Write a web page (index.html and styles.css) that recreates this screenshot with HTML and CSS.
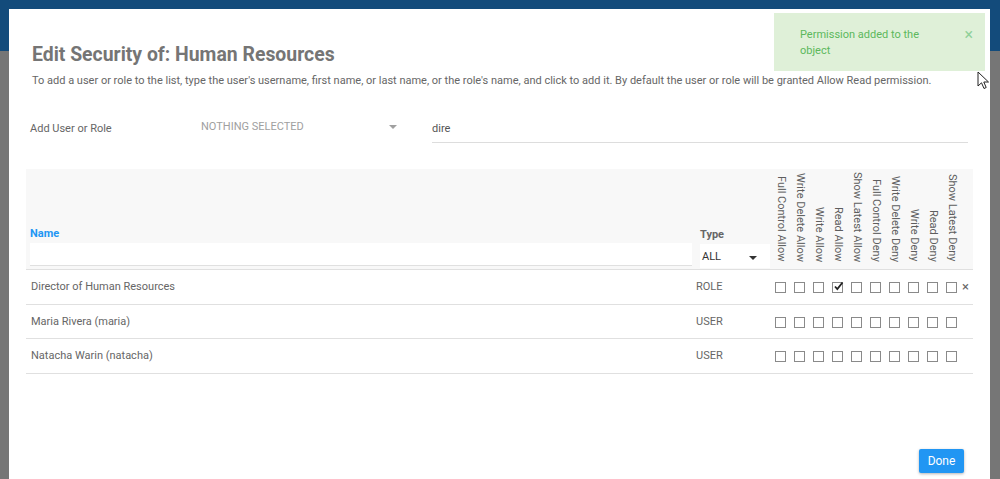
FILE: index.html
```html
<!DOCTYPE html>
<html lang="en">
<head>
    <meta charset="UTF-8">
    <meta name="viewport" content="width=device-width, initial-scale=1.0">
    <title>Edit Security</title>
    <link rel="stylesheet" href="styles.css">
</head>
<body>
    <div class="modal">
        <h1 class="title">Edit Security of: Human Resources</h1>
        <p class="hint">To add a user or role to the list, type the user's username, first name, or last name, or the role's name, and click to add it. By default the user or role will be granted Allow Read permission.</p>

        <div class="add-row">
            <label class="add-label">Add User or Role</label>
            <div class="select">
                <span>NOTHING SELECTED</span>
                <span class="caret"></span>
            </div>
            <div class="search">dire</div>
        </div>

        <table class="perms">
            <thead>
                <tr>
                    <th class="col-name">
                        <div class="name-label">Name</div>
                        <div class="name-filter"></div>
                    </th>
                    <th class="col-type">
                        <div class="type-label">Type</div>
                        <div class="type-select"><span>ALL</span><span class="caret dark"></span></div>
                    </th>
                    <th class="rot"><span>Full Control Allow</span></th>
                    <th class="rot"><span>Write Delete Allow</span></th>
                    <th class="rot"><span>Write Allow</span></th>
                    <th class="rot"><span>Read Allow</span></th>
                    <th class="rot"><span>Show Latest Allow</span></th>
                    <th class="rot"><span>Full Control Deny</span></th>
                    <th class="rot"><span>Write Delete Deny</span></th>
                    <th class="rot"><span>Write Deny</span></th>
                    <th class="rot"><span>Read Deny</span></th>
                    <th class="rot"><span>Show Latest Deny</span></th>
                    <th class="col-remove"></th>
                </tr>
            </thead>
            <tbody id="rows"></tbody>
        </table>

        <div class="footer">
            <button class="done">Done</button>
        </div>
    </div>

    <div class="toast">
        <span class="toast-text">Permission added to the object</span>
        <span class="toast-close">&times;</span>
    </div>

    <svg class="cursor" width="14" height="20" viewBox="0 0 14 20">
        <path d="M1 1 L1 15 L4.5 11.8 L7 17.5 L9.2 16.5 L6.8 11 L11.5 11 Z" fill="#fff" stroke="#222" stroke-width="1"/>
    </svg>

    <script>
        const entries = [
            { name: 'Director of Human Resources', type: 'ROLE', checked: [3], removable: true },
            { name: 'Maria Rivera (maria)', type: 'USER', checked: [], removable: false },
            { name: 'Natacha Warin (natacha)', type: 'USER', checked: [], removable: false }
        ];

        const check = '<svg width="11" height="11" viewBox="0 0 11 11"><path d="M2 5.5 L4.3 8 L9.5 1.5" fill="none" stroke="#222" stroke-width="1.8"/></svg>';

        document.getElementById('rows').innerHTML = entries.map(e => {
            let boxes = '';
            for (let i = 0; i < 10; i++) {
                const on = e.checked.includes(i);
                boxes += `<td class="cb"><span class="box">${on ? check : ''}</span></td>`;
            }
            return `<tr>
                <td class="cell-name">${e.name}</td>
                <td class="cell-type">${e.type}</td>
                ${boxes}
                <td class="cell-remove">${e.removable ? '&times;' : ''}</td>
            </tr>`;
        }).join('');
    </script>
</body>
</html>
```

FILE: styles.css
```css
body {
    margin: 0;
    height: 479px;
    overflow: hidden;
    font-family: Roboto, "Liberation Sans", Arial, sans-serif;
    font-size: 11px;
    background: linear-gradient(#134b7b 0, #134b7b 51px, #767676 51px);
}
.modal {
    display: flex;
    flex-direction: column;
    box-sizing: border-box;
    margin: 9px 10px 0 9px;
    height: 470px;
    padding: 34px 0 0 17px;
    background: #ffffff;
    color: #666666;
}
.title {
    margin: 0 0 0 6px;
    font-size: 19.4px;
    line-height: 24px;
    font-weight: 700;
    color: #757575;
}
.hint {
    margin: 6px 0 0 6px;
    font-size: 11px;
    line-height: 16px;
    color: #666666;
}
.add-row {
    display: flex;
    align-items: flex-start;
    margin-top: 27px;
    height: 28px;
}
.add-label {
    width: 175px;
    padding: 5px 0 0 4px;
    box-sizing: border-box;
    font-size: 11px;
    line-height: 16px;
}
.select {
    display: flex;
    justify-content: space-between;
    width: 200px;
    padding-top: 3px;
    font-size: 11px;
    line-height: 16px;
    color: #a0a0a0;
}
.caret {
    width: 0;
    height: 0;
    margin: 6px 4px 0 0;
    border-left: 4px solid transparent;
    border-right: 4px solid transparent;
    border-top: 4px solid #a0a0a0;
}
.caret.dark {
    border-top-color: #333333;
    margin-top: 6px;
}
.search {
    flex: 0 0 536px;
    margin-left: 31px;
    height: 27px;
    box-sizing: border-box;
    padding-top: 5px;
    font-size: 11px;
    line-height: 16px;
    color: #555555;
    border-bottom: 1px solid #dddddd;
}
.perms {
    margin-top: 25px;
    width: 947px;
    border-collapse: collapse;
    table-layout: fixed;
    font-size: 11px;
}
.perms thead tr {
    background: #f8f8f8;
    border-bottom: 1px solid #e0e0e0;
}
.perms th {
    height: 93px;
    padding: 0;
    vertical-align: bottom;
    font-weight: 400;
    text-align: left;
}
.col-name {
    width: 662px;
    padding: 0 3px 3px 4px !important;
}
.name-label {
    font-size: 11px;
    line-height: 14px;
    font-weight: 700;
    color: #2196f3;
}
.name-filter {
    height: 22px;
    margin-top: 2px;
    background: #ffffff;
    border-bottom: 1px solid #e0e0e0;
}
.col-type {
    width: 70px;
    padding: 0 2px 1px 5px !important;
}
.type-label {
    font-weight: 700;
    color: #666666;
    line-height: 14px;
}
.type-select {
    display: flex;
    justify-content: space-between;
    height: 24px;
    margin-top: 2px;
    padding: 6px 9px 0 2px;
    box-sizing: border-box;
    background: #ffffff;
    color: #333333;
    line-height: 14px;
}
.rot {
    width: 19px;
    line-height: 0;
    padding-bottom: 7px !important;
    text-align: center !important;
}
.rot span {
    display: inline-block;
    vertical-align: bottom;
    writing-mode: vertical-rl;
    font-size: 11px;
    line-height: 13px;
    color: #5e5e5e;
    white-space: nowrap;
}
.col-remove {
    width: 11px;
}
.perms tbody tr {
    height: 34.5px;
    border-bottom: 1px solid #e0e0e0;
}
.perms td {
    padding: 0;
}
.cell-name {
    padding-left: 5px !important;
    color: #666666;
}
.cell-type {
    padding-left: 1px !important;
    color: #666666;
}
.cb {
    text-align: center;
}
.box {
    display: inline-block;
    box-sizing: border-box;
    width: 11px;
    height: 11px;
    margin: 1px 0 0 -3px;
    border: 1px solid #8a8a8a;
    vertical-align: middle;
}
.box svg {
    display: block;
    margin: -2px 0 0 0;
}
.cell-remove {
    font-size: 13px;
    color: #666666;
    text-align: left;
}
.footer {
    display: flex;
    justify-content: flex-end;
    margin-top: auto;
    padding: 0 26px 6px 0;
}
.done {
    width: 45px;
    height: 24px;
    border: none;
    border-radius: 2px;
    background: #2196f3;
    color: #ffffff;
    font-family: Roboto, "Liberation Sans", Arial, sans-serif;
    font-size: 12px;
    box-shadow: 0 1px 3px rgba(0, 0, 0, 0.3);
}
.toast {
    position: absolute;
    left: 774px;
    top: 13px;
    width: 211px;
    height: 58px;
    box-sizing: border-box;
    padding: 14px 0 0 26px;
    display: flex;
    justify-content: space-between;
    background: #dff0d8;
    color: #5cb85c;
    font-size: 11px;
    line-height: 16px;
}
.toast-text {
    width: 135px;
}
.toast-close {
    margin-right: 12px;
    font-size: 16px;
    line-height: 16px;
    color: #91d09a;
}
.cursor {
    position: absolute;
    left: 977px;
    top: 71px;
}
```
